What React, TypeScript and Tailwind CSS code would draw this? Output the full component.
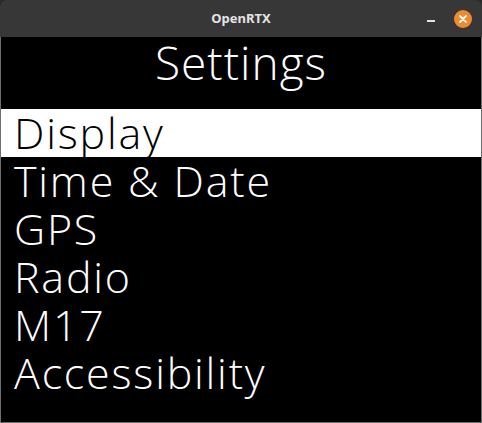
import React from "react";

const items = ["Display", "Time & Date", "GPS", "Radio", "M17", "Accessibility"];

export default function App() {
  return (
    <div className="w-[482px] h-[423px] bg-[#2a2a2a] flex flex-col">
      <div className="relative h-[37px] shrink-0 bg-[#373737] rounded-t-[7px] flex items-center justify-center">
        <span className="font-['Noto_Sans',sans-serif] font-bold text-[13px] text-[#e4e4e4]">
          OpenRTX
        </span>
        <div className="absolute left-[427px] top-[20px] w-[8px] h-[2px] bg-[#e4e4e4]" />
        <div className="absolute left-[454px] top-[10px] w-[18px] h-[18px] rounded-full bg-[#ef8a2d] flex items-center justify-center">
          <svg width="8" height="8" viewBox="0 0 8 8">
            <path d="M1 1L7 7M7 1L1 7" stroke="white" strokeWidth="1.8" strokeLinecap="round" />
          </svg>
        </div>
      </div>
      <div className="flex-1 bg-black border-x border-b border-[#6e6e6e] font-['Open_Sans',sans-serif] font-light text-white">
        <div className="h-[72px] pt-[2px] text-center text-[46px] leading-[46px] tracking-[1px]">
          Settings
        </div>
        {items.map((item, i) => (
          <div
            key={item}
            className={`h-[48px] pl-[13px] pt-[2px] text-[43px] leading-[44px] tracking-[1.8px] ${
              i === 0 ? "bg-white text-black" : ""
            }`}
          >
            {item}
          </div>
        ))}
      </div>
    </div>
  );
}
